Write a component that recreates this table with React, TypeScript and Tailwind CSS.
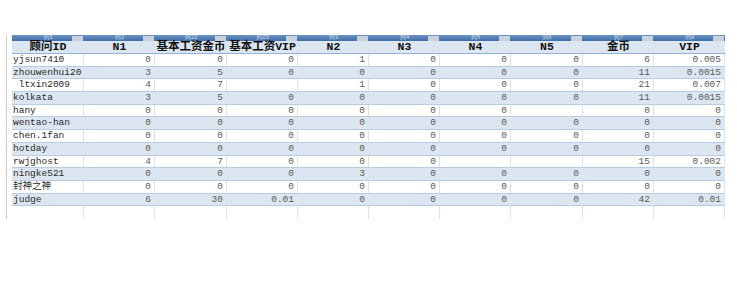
import React from "react";

const headers = ["顾问ID", "N1", "基本工资金币", "基本工资VIP", "N2", "N3", "N4", "N5", "金币", "VIP"];
const stripLabels = ["列1", "列2", "列22", "列23", "列3", "列4", "列5", "列6", "列7", "列8"];

const rows: string[][] = [
  ["yjsun7410", "0", "0", "0", "1", "0", "0", "0", "6", "0.005"],
  ["zhouwenhui20", "3", "5", "0", "0", "0", "0", "0", "11", "0.0015"],
  [" ltxin2009", "4", "7", "", "1", "0", "0", "0", "21", "0.007"],
  ["kolkata", "3", "5", "0", "0", "0", "0", "0", "11", "0.0015"],
  ["hany", "0", "0", "0", "0", "0", "0", "", "0", "0"],
  ["wentao-han", "0", "0", "0", "0", "0", "0", "0", "0", "0"],
  ["chen.1fan", "0", "0", "0", "0", "0", "0", "0", "0", "0"],
  ["hotday", "0", "0", "0", "0", "0", "0", "0", "0", "0"],
  ["rwjghost", "4", "7", "0", "0", "0", "", "", "15", "0.002"],
  ["ningke521", "0", "0", "0", "3", "0", "0", "0", "0", "0"],
  ["封神之神", "0", "0", "0", "0", "0", "0", "0", "0", "0"],
  ["judge", "6", "30", "0.01", "0", "0", "0", "0", "42", "0.01"],
  ["", "", "", "", "", "", "", "", "", ""],
];

const cols = "grid grid-cols-[72px_71px_72px_71px_71px_71px_71px_72px_71px_71px]";
const font = { fontFamily: '"Liberation Mono", "Noto Sans CJK SC", monospace' };

export default function App() {
  return (
    <div className="w-[737px] h-[285px] bg-white pt-[35px] flex" style={font}>
      <div className="w-[7px] h-[184px] border-r border-[#c8ccd2]" />
      <div className="ml-[5px] w-[713px]">
        {/* table column strip */}
        <div className={`${cols} h-[6px] bg-gradient-to-b from-[#6d93c4] to-[#3f6ea8]`}>
          {stripLabels.map((l) => (
            <div key={l} className="relative flex justify-center">
              <span className="text-[6px] leading-[6px] text-white/70">{l}</span>
              <span className="absolute right-[1px] top-[1px] w-[11px] h-[5px] bg-[#c9d1dc]" />
            </div>
          ))}
        </div>
        {/* header row */}
        <div className={`${cols} h-[13px] bg-[#dce6f1] border-b border-[#95b3d7]`}>
          {headers.map((h) => (
            <div key={h} className="flex items-center justify-center text-[11.5px] leading-[12px] font-bold text-[#111]">
              {h}
            </div>
          ))}
        </div>
        {rows.map((r, i) => (
          <div
            key={i}
            className={`${cols} h-[12.7px] border-b border-[#b8cce4] ${i % 2 === 1 ? "bg-[#dce6f1]" : "bg-white"} ${i === rows.length - 1 ? "border-b-0" : ""}`}
          >
            {r.map((c, j) => (
              <div
                key={j}
                className={`overflow-hidden whitespace-pre text-[9.5px] leading-[12px] border-r ${i % 2 === 1 ? "border-transparent" : "border-[#dde2ea]"} ${j === 0 ? "pl-[1px] text-[#2a2a2a]" : "text-right pr-[3px] text-[#5a5a5a]"}`}
              >
                {c}
              </div>
            ))}
          </div>
        ))}
      </div>
    </div>
  );
}
